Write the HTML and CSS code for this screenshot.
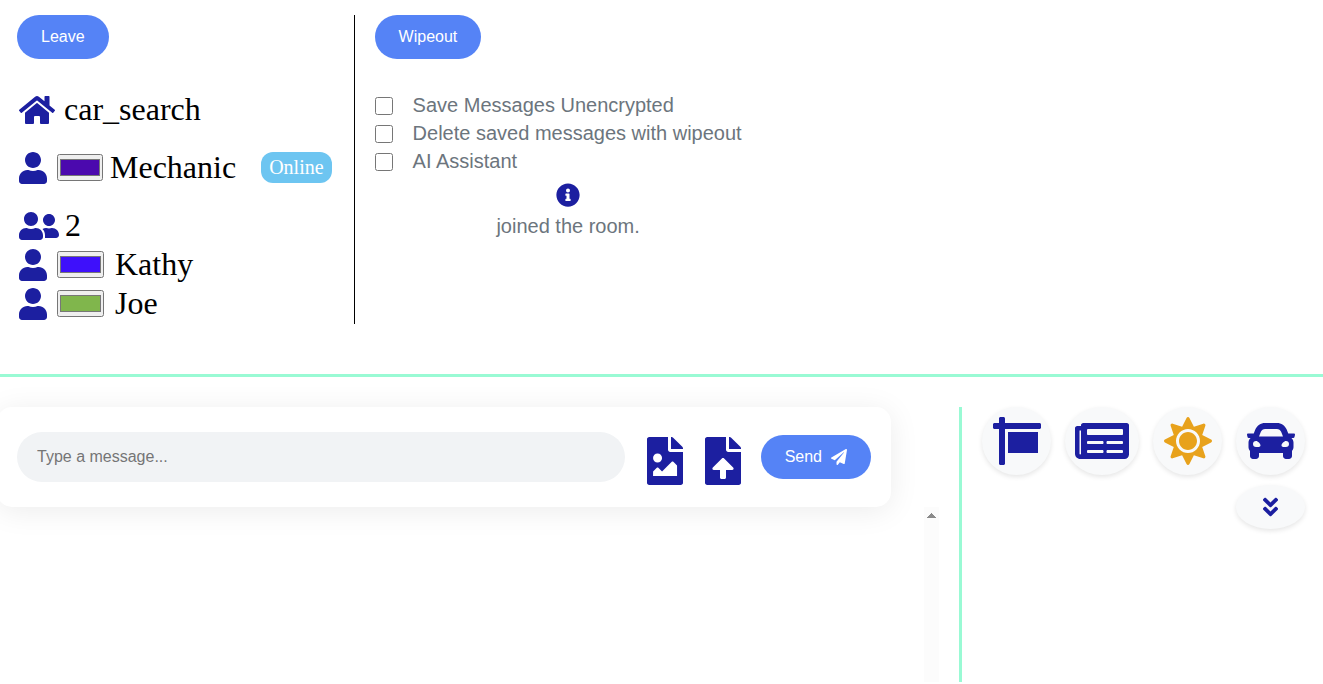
FILE: index.html
```html
<!DOCTYPE html>
<html lang="en">
<head>
<meta charset="utf-8">
<meta name="viewport" content="width=device-width, initial-scale=1">
<title>car_search</title>
<link rel="stylesheet" href="styles.css">
</head>
<body>
<svg class="sprite" aria-hidden="true">
  <symbol id="user" viewBox="0 0 448 512"><path d="M224 256c70.700 0 128-57.300 128-128S294.700 0 224 0 96 57.300 96 128s57.300 128 128 128zm89.600 32h-16.700c-22.200 10.200-46.900 16-72.900 16s-50.600-5.800-72.900-16h-16.700C60.200 288 0 348.200 0 422.400V464c0 26.500 21.500 48 48 48h352c26.500 0 48-21.500 48-48v-41.600c0-74.200-60.200-134.400-134.400-134.400z"/></symbol>
</svg>

<header class="top">
  <section class="room">
    <button class="btn" type="button">Leave</button>
    <div class="line line-room">
      <svg class="icon icon-home" viewBox="0 0 576 512" aria-hidden="true"><path d="M280.370 148.260L96 300.110V464a16 16 0 0 0 16 16l112.060-.29a16 16 0 0 0 15.920-16V368a16 16 0 0 1 16-16h64a16 16 0 0 1 16 16v95.640a16 16 0 0 0 16 16.050L464 480a16 16 0 0 0 16-16V300L295.670 148.260a12.190 12.190 0 0 0-15.300 0zM571.600 251.470L488 182.560V44.050a12 12 0 0 0-12-12h-56a12 12 0 0 0-12 12v72.610L318.470 43a48 48 0 0 0-61 0L4.340 251.470a12 12 0 0 0-1.600 16.900l25.500 31A12 12 0 0 0 45.150 301l235.220-193.740a12.190 12.190 0 0 1 15.300 0L530.900 301a12 12 0 0 0 16.900-1.600l25.500-31a12 12 0 0 0-1.700-16.930z"/></svg>
      <span>car_search</span>
    </div>
    <div class="line line-self">
      <svg class="icon icon-user" aria-hidden="true"><use href="#user"/></svg>
      <input class="swatch" type="color" value="#4b09ae" aria-label="Mechanic colour">
      <span class="self-name">Mechanic</span>
      <span class="status">Online</span>
    </div>
    <div class="line line-count">
      <svg class="icon icon-friends" viewBox="0 0 640 512" aria-hidden="true"><path d="M192 256c61.900 0 112-50.100 112-112S253.900 32 192 32 80 82.100 80 144s50.100 112 112 112zm76.800 32h-8.300c-20.800 10-43.900 16-68.500 16s-47.600-6-68.500-16h-8.300C51.600 288 0 339.600 0 403.200V432c0 26.500 21.500 48 48 48h288c26.500 0 48-21.500 48-48v-28.800c0-63.600-51.600-115.200-115.200-115.200zM480 256c53 0 96-43 96-96s-43-96-96-96-96 43-96 96 43 96 96 96zm48 32h-3.800c-13.900 4.800-28.600 8-44.200 8s-30.300-3.200-44.200-8H432c-20.400 0-39.200 5.900-55.700 15.400 24.400 26.300 39.700 61.200 39.700 99.800v38.400c0 2.200-.5 4.300-.6 6.400H592c26.500 0 48-21.500 48-48 0-61.900-50.100-112-112-112z"/></svg>
      <span>2</span>
    </div>
    <div class="line">
      <svg class="icon icon-user" aria-hidden="true"><use href="#user"/></svg>
      <input class="swatch swatch-member" type="color" value="#3e10fb" aria-label="Kathy colour">
      <span>Kathy</span>
    </div>
    <div class="line">
      <svg class="icon icon-user" aria-hidden="true"><use href="#user"/></svg>
      <input class="swatch swatch-member" type="color" value="#80b64c" aria-label="Joe colour">
      <span>Joe</span>
    </div>
  </section>

  <section class="options">
    <button class="btn" type="button">Wipeout</button>
    <div class="checks">
      <label class="check"><input type="checkbox">Save Messages Unencrypted</label>
      <label class="check"><input type="checkbox">Delete saved messages with wipeout</label>
      <label class="check"><input type="checkbox">AI Assistant</label>
    </div>
    <div class="notice">
      <svg class="icon icon-info" viewBox="0 0 512 512" aria-hidden="true"><path d="M256 8C119.043 8 8 119.083 8 256c0 136.997 111.043 248 248 248s248-111.003 248-248C504 119.083 392.957 8 256 8zm0 110c23.196 0 42 18.804 42 42s-18.804 42-42 42-42-18.804-42-42 18.804-42 42-42zm56 254c0 6.627-5.373 12-12 12h-88c-6.627 0-12-5.373-12-12v-24c0-6.627 5.373-12 12-12h12v-64h-12c-6.627 0-12-5.373-12-12v-24c0-6.627 5.373-12 12-12h64c6.627 0 12 5.373 12 12v100h12c6.627 0 12 5.373 12 12v24z"/></svg>
      <span>joined the room.</span>
    </div>
  </section>
</header>

<main class="bottom">
  <section class="chat">
    <form class="composer">
      <input class="message" type="text" placeholder="Type a message..." aria-label="Message">
      <button class="attach" type="button" aria-label="Attach image">
        <svg class="icon icon-file" viewBox="0 0 384 512" aria-hidden="true"><path d="M384 121.941V128H256V0h6.059c6.365 0 12.470 2.529 16.971 7.029l97.941 97.941A24.005 24.005 0 0 1 384 121.941zM248 160c-13.200 0-24-10.800-24-24V0H24C10.745 0 0 10.745 0 24v464c0 13.255 10.745 24 24 24h336c13.255 0 24-10.745 24-24V160H248zm-135.455 16c26.510 0 48 21.490 48 48s-21.490 48-48 48-48-21.490-48-48 21.491-48 48-48zm208 240h-256l.485-48.485L104.545 328c4.686-4.686 11.799-4.201 16.485.485L160.545 368 264.060 264.485c4.686-4.686 12.284-4.686 16.971 0L320.545 304v112z"/></svg>
      </button>
      <button class="attach" type="button" aria-label="Upload file">
        <svg class="icon icon-file" viewBox="0 0 384 512" aria-hidden="true"><path d="M224 136V0H24C10.700 0 0 10.700 0 24v464c0 13.300 10.700 24 24 24h336c13.300 0 24-10.700 24-24V160H248c-13.200 0-24-10.800-24-24zm65.180 216.010H224v80c0 8.840-7.160 16-16 16h-32c-8.840 0-16-7.160-16-16v-80H94.820c-14.280 0-21.410-17.290-11.270-27.360l96.420-95.700c6.650-6.610 17.390-6.610 24.040 0l96.420 95.700c10.150 10.070 3.030 27.360-11.250 27.360zM377 105L279.100 7c-4.500-4.500-10.600-7-17-7H256v128h128v-6.100c0-6.300-2.500-12.400-7-16.900z"/></svg>
      </button>
      <button class="btn btn-send" type="button">Send
        <svg class="icon-plane" viewBox="0 0 512 512" aria-hidden="true"><path d="M476 3.200L12.500 270.600c-18.100 10.400-15.800 35.600 2.200 43.200L121 358.400l287.300-253.200c5.500-4.900 13.300 2.600 8.600 8.300L176 407v80.500c0 23.600 28.500 32.900 42.500 15.800L282 426l124.600 52.200c14.200 6 30.400-2.900 33-18.200l72-432C515 7.800 493.300-6.800 476 3.200z"/></svg>
      </button>
    </form>
    <div class="messages">
      <div class="track">
        <svg class="track-arrow" viewBox="0 0 9 5" shape-rendering="crispEdges" aria-hidden="true"><path d="M4 0h1v1h1v1h1v1h1v1h1v1H0V4h1V3h1V2h1V1h1z"/></svg>
      </div>
    </div>
  </section>

  <nav class="shortcuts" aria-label="Shortcuts">
    <button class="bubble" type="button" aria-label="Signs">
      <svg class="icon icon-large" viewBox="0 0 512 512" aria-hidden="true"><path d="M496 64H128V16c0-8.800-7.200-16-16-16H80c-8.800 0-16 7.200-16 16v48H16C7.200 64 0 71.200 0 80v32c0 8.800 7.200 16 16 16h48v368c0 8.800 7.200 16 16 16h32c8.800 0 16-7.200 16-16V128h368c8.800 0 16-7.200 16-16V80c0-8.800-7.200-16-16-16zM160 384h320V160H160v224z"/></svg>
    </button>
    <button class="bubble" type="button" aria-label="News">
      <svg class="icon icon-news" viewBox="0 0 576 512" aria-hidden="true"><path d="M552 64H88c-13.255 0-24 10.745-24 24v8H24c-13.255 0-24 10.745-24 24v272c0 30.928 25.072 56 56 56h472c26.510 0 48-21.490 48-48V88c0-13.255-10.745-24-24-24zM56 400a8 8 0 0 1-8-8V144h16v248a8 8 0 0 1-8 8zm236-16H140c-6.627 0-12-5.373-12-12v-8c0-6.627 5.373-12 12-12h152c6.627 0 12 5.373 12 12v8c0 6.627-5.373 12-12 12zm208 0H348c-6.627 0-12-5.373-12-12v-8c0-6.627 5.373-12 12-12h152c6.627 0 12 5.373 12 12v8c0 6.627-5.373 12-12 12zm-208-96H140c-6.627 0-12-5.373-12-12v-8c0-6.627 5.373-12 12-12h152c6.627 0 12 5.373 12 12v8c0 6.627-5.373 12-12 12zm208 0H348c-6.627 0-12-5.373-12-12v-8c0-6.627 5.373-12 12-12h152c6.627 0 12 5.373 12 12v8c0 6.627-5.373 12-12 12zm0-96H140c-6.627 0-12-5.373-12-12v-40c0-6.627 5.373-12 12-12h360c6.627 0 12 5.373 12 12v40c0 6.627-5.373 12-12 12z"/></svg>
    </button>
    <button class="bubble" type="button" aria-label="Weather">
      <svg class="icon icon-large icon-sun" viewBox="0 0 512 512" aria-hidden="true"><path d="M256 160c-52.900 0-96 43.100-96 96s43.100 96 96 96 96-43.100 96-96-43.100-96-96-96zm246.400 80.500l-94.700-47.300 33.500-100.400c4.500-13.600-8.400-26.500-21.900-21.900l-100.400 33.500-47.400-94.800c-6.400-12.800-24.600-12.800-31 0l-47.300 94.700L92.700 70.800c-13.600-4.500-26.500 8.400-21.900 21.900l33.500 100.400-94.700 47.400c-12.800 6.400-12.800 24.600 0 31l94.700 47.300-33.500 100.500c-4.500 13.600 8.400 26.500 21.900 21.900l100.400-33.500 47.300 94.700c6.400 12.800 24.600 12.800 31 0l47.300-94.700 100.400 33.500c13.600 4.500 26.500-8.400 21.900-21.900l-33.500-100.400 94.700-47.300c13-6.500 13-24.700.2-31.100zm-155.900 106c-49.900 49.900-131.100 49.900-181 0-49.900-49.900-49.900-131.100 0-181 49.900-49.900 131.100-49.900 181 0 49.900 49.900 49.900 131.100 0 181z"/></svg>
    </button>
    <button class="bubble" type="button" aria-label="Cars">
      <svg class="icon icon-large" viewBox="0 0 512 512" aria-hidden="true"><path d="M499.990 176h-59.870l-16.640-41.600C406.380 91.630 365.570 64 319.500 64h-127c-46.060 0-86.880 27.630-103.990 70.400L71.870 176H12.010C4.200 176-1.530 183.340.37 190.910l6 24C7.700 220.250 12.500 224 18.010 224h20.070C24.650 235.730 16 252.780 16 272v48c0 16.120 6.160 30.670 16 41.930V416c0 17.670 14.330 32 32 32h32c17.670 0 32-14.330 32-32v-32h256v32c0 17.670 14.330 32 32 32h32c17.670 0 32-14.330 32-32v-54.070c9.840-11.250 16-25.800 16-41.930v-48c0-19.220-8.650-36.270-22.070-48H494c5.510 0 10.310-3.750 11.640-9.090l6-24c1.890-7.570-3.840-14.910-11.650-14.910zm-352.060-17.830c7.290-18.220 24.940-30.170 44.570-30.170h127c19.630 0 37.280 11.950 44.570 30.170L384 208H128l19.930-49.830zM96 319.800c-19.200 0-32-12.760-32-31.900S76.800 256 96 256s48 28.710 48 47.850-28.800 15.950-48 15.950zm320 0c-19.200 0-48 3.190-48-15.950S396.800 256 416 256s32 12.760 32 31.900-12.800 31.900-32 31.900z"/></svg>
    </button>
    <button class="bubble" type="button" aria-label="More">
      <svg class="icon icon-more" viewBox="0 0 320 512" aria-hidden="true"><path d="M143 256.300L7 120.300c-9.400-9.400-9.400-24.600 0-33.900l22.600-22.600c9.400-9.400 24.600-9.400 33.900 0l96.400 96.400 96.400-96.400c9.400-9.400 24.600-9.400 33.900 0L313 86.300c9.400 9.400 9.400 24.600 0 33.900l-136 136c-9.400 9.500-24.600 9.500-34 .1zm34 192l136-136c9.400-9.400 9.400-24.600 0-33.900l-22.600-22.600c-9.400-9.400-24.600-9.400-33.900 0L160 352.100l-96.400-96.400c-9.400-9.400-24.600-9.400-33.900 0L7 278.300c-9.400 9.400-9.400 24.600 0 33.900l136 136c9.400 9.500 24.600 9.500 34 .1z"/></svg>
    </button>
  </nav>
</main>
</body>
</html>
```

FILE: styles.css
```css
* {
  box-sizing: border-box;
}

body {
  display: flex;
  flex-direction: column;
  min-height: 100vh;
  margin: 0;
  padding-bottom: 2px;
  overflow-x: hidden;
  background: #fff;
  color: #000;
  font-family: "Liberation Serif", "Times New Roman", serif;
}

.sprite {
  display: none;
}

.icon {
  display: block;
  flex: none;
  height: 32px;
  fill: #1c1fa0;
}

.btn {
  display: inline-flex;
  align-items: center;
  gap: 9px;
  height: 44px;
  padding: 0 24px;
  border: 0;
  border-radius: 25px;
  background: #5583f6;
  color: #fff;
  font: 16px "Liberation Sans", Arial, sans-serif;
  cursor: pointer;
}

/* Room and options */
.top {
  display: flex;
  align-items: flex-start;
  padding: 15px 17px 50px;
  border-bottom: 3px solid #99fad4;
}

.room {
  padding: 0 22px 1px 0;
  border-right: 1px solid #000;
}

.line {
  display: flex;
  align-items: center;
  height: 39px;
  padding-left: 2px;
  font-size: 32px;
}

.line-room {
  gap: 9px;
  margin-top: 31px;
}

.line-self,
.line-count {
  margin-top: 19px;
}

.line-count {
  gap: 6px;
}

.icon-home {
  width: 36px;
}

.icon-user {
  width: 28px;
}

.icon-friends {
  width: 40px;
}

.swatch {
  width: 46px;
  height: 27px;
  margin: 0 7px 0 10px;
  padding: 0;
}

.swatch-member {
  width: 47px;
  margin-right: 11px;
}

.status {
  margin-left: 25px;
  padding: 4px 8px;
  border-radius: 12px;
  background: #6dc5f1;
  color: #fff;
  font-size: 20px;
  line-height: 23px;
}

.options {
  padding: 0 20px;
  color: #6c757d;
  font: 20px/28px "Liberation Sans", Arial, sans-serif;
}

.checks {
  margin-top: 32px;
}

.check {
  display: flex;
  align-items: center;
}

.check input {
  width: 18px;
  height: 18px;
  margin: 2px 20px 0 0;
}

.notice {
  display: flex;
  flex-direction: column;
  align-items: center;
  gap: 5px;
  padding: 8px 0 0 20px;
}

.icon-info {
  width: 24px;
  height: 24px;
}

/* Conversation */
.bottom {
  display: flex;
  flex: 1;
  padding-top: 30px;
}

.chat {
  display: flex;
  flex: 1;
  flex-direction: column;
  min-width: 0;
  padding-right: 20px;
  border-right: 3px solid #99fad4;
}

.composer {
  display: flex;
  align-items: center;
  height: 100px;
  margin: 0 48px 0 -3px;
  padding: 0 20px;
  border-radius: 15px;
  background: #fff;
  box-shadow: 0 4px 30px rgba(0, 0, 0, 0.08);
}

.message {
  flex: 1;
  min-width: 0;
  height: 50px;
  padding: 0 20px;
  border: 0;
  border-radius: 25px;
  background: #f1f3f5;
  font: 16px "Liberation Sans", Arial, sans-serif;
}

.message::placeholder {
  color: #757575;
}

.attach {
  margin-left: 22px;
  padding: 8px 0 0;
  border: 0;
  background: none;
  cursor: pointer;
}

.icon-file {
  width: 36px;
  height: 48px;
}

.btn-send {
  margin-left: 20px;
}

.icon-plane {
  width: 16px;
  height: 16px;
  fill: #fff;
}

.messages {
  display: flex;
  flex: 1;
  justify-content: flex-end;
}

.track {
  display: flex;
  justify-content: center;
  width: 15px;
  padding-top: 6px;
  background: #fcfcfc;
}

.track-arrow {
  width: 9px;
  height: 5px;
  fill: #8b8b8b;
}

/* Shortcut bubbles */
.shortcuts {
  display: flex;
  flex: none;
  flex-wrap: wrap;
  align-content: flex-start;
  justify-content: flex-end;
  gap: 10px 14px;
  width: 361px;
  padding-right: 18px;
}

.bubble {
  display: flex;
  align-items: center;
  justify-content: center;
  min-width: 69px;
  padding: 10px;
  border: 0;
  border-radius: 50%;
  background: #f8f9fa;
  box-shadow: 0 2px 5px rgba(0, 0, 0, 0.1);
  cursor: pointer;
}

.icon-large {
  width: 48px;
  height: 48px;
}

.icon-news {
  width: 54px;
  height: 48px;
}

.icon-sun {
  fill: #e8a21c;
}

.icon-more {
  width: 15px;
  height: 24px;
}
```
